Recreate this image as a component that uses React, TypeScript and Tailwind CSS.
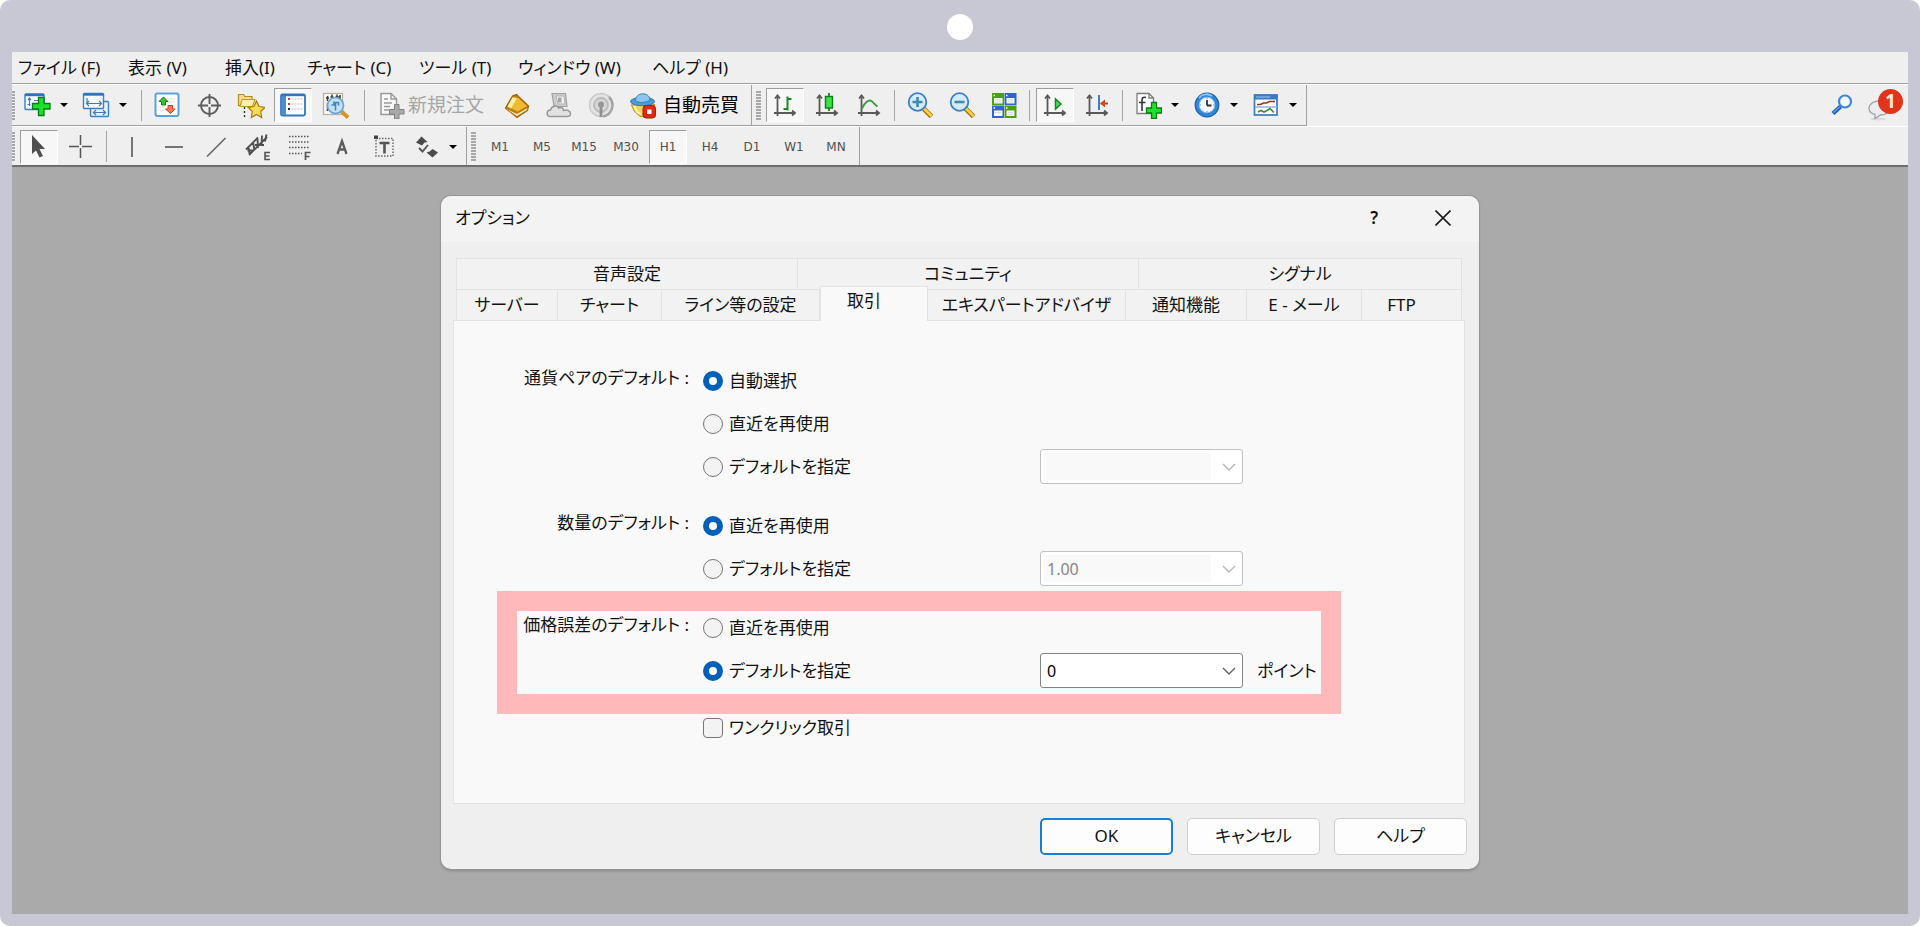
import React, { useState } from "react";
import type { ReactNode } from "react";

/* ---------- shared drawing helpers ---------- */

function Icon({ children }: { children: ReactNode }) {
  return (
    <svg width="28" height="28" viewBox="0 0 28 28" fill="none" aria-hidden="true" className="shrink-0">
      {children}
    </svg>
  );
}

const Axes = () => (
  <g stroke="#595959" strokeWidth="1.8" fill="none">
    <path d="M6.5 4.5V25M3 22H24" />
    <path d="M4 7.5L6.5 4.5L9 7.500M21 19.500L24 22L21 24.500" />
  </g>
);

const GreenPlus = () => (
  <path
    d="M17.5 11.5h5v5.5h5v5h-5v5.5h-5V22h-5v-5h5z"
    fill="#1fe02b"
    stroke="#0a7d12"
    strokeWidth="1.3"
  />
);

/* ---------- main toolbar icons ---------- */

const NewChart = () => (
  <Icon>
    <rect x="2" y="3" width="19" height="15.5" rx="1" fill="#f4faff" stroke="#3b7fc4" strokeWidth="1.4" />
    <path d="M2 4h19" stroke="#2e73bd" strokeWidth="2.4" />
    <path d="M6.5 7v8M5 9l1.500-2L8 9M4.500 13.500h3M11 9.500h4" stroke="#4a78a8" strokeWidth="1.2" />
    <path d="M15.500 6.500h5.500v6h6v5.500h-6v6.500h-5.500V18h-6v-5.500h6z" fill="#1fe02b" stroke="#0a7d12" strokeWidth="1.300" />
  </Icon>
);

const Profiles = () => (
  <Icon>
    <rect x="8.500" y="10.500" width="18" height="15" rx="1" fill="#e6f1fb" stroke="#3b7fc4" strokeWidth="1.400" />
    <path d="M12 21.500h11M14 19l-2.500 2.500L14 24M21 19l2.500 2.500L21 24" stroke="#4a78a8" strokeWidth="1.200" />
    <rect x="1.500" y="2.500" width="20" height="15" rx="1" fill="#f4faff" stroke="#3b7fc4" strokeWidth="1.400" />
    <path d="M1.500 3.500h20" stroke="#2e73bd" strokeWidth="2.400" />
    <path d="M5 7v7M4 12.500h15M7 10l-2.500 2.500L7 15M17 10l2.500 2.500L17 15" stroke="#4a78a8" strokeWidth="1.200" />
  </Icon>
);

const MarketWatch = () => (
  <Icon>
    <rect x="2.500" y="2.500" width="23" height="22.500" rx="2" fill="#fff" stroke="#58a3dc" strokeWidth="2" />
    <path d="M14 8h8M14 11h8M6 16h6M6 19h6" stroke="#dcdcdc" />
    <path d="M10.500 6l4.500 4.500h-2.500v3.500h-4v-3.500H6z" fill="#35c335" stroke="#148214" />
    <path d="M17.500 22.500l-5-4.500H15v-3.500h4.500V18h2.500z" fill="#ff7a5c" stroke="#d03a1c" />
  </Icon>
);

const DataWindow = () => (
  <Icon>
    <g stroke="#5e5e5e" strokeWidth="1.900">
      <circle cx="14.500" cy="14.500" r="8.500" />
      <path d="M14.500 3v10M14.500 16v10M3 14.500h10M16 14.500h10" />
    </g>
  </Icon>
);

const Navigator = () => (
  <Icon>
    <path d="M7.500 16v11" stroke="#333" strokeWidth="1.400" strokeDasharray="2 2" />
    <path d="M1.500 3.500h5l1.500 2h7v9h-13.500z" fill="#f6df7c" stroke="#b58a1c" strokeWidth="1.200" />
    <path d="M3 15.500l2-7h13l-2.500 7z" fill="#fdf0a8" stroke="#c29a2a" strokeWidth="1.100" />
    <path
      d="M19.500 10l2.500 5.500 6 .8-4.300 4.200 1 6-5.200-3-5.200 3 1-6-4.300-4.200 6-.8z"
      fill="#f7dc5c"
      stroke="#a97b12"
      strokeWidth="1.200"
    />
  </Icon>
);

const Terminal = () => (
  <Icon>
    <rect x="2" y="3.500" width="24" height="21" rx="1.500" fill="#fff" stroke="#3277bd" strokeWidth="1.800" />
    <path d="M2.500 4h4.500v20h-4.500z" fill="#4a8ed0" />
    <path d="M2 4.200h24" stroke="#3277bd" strokeWidth="2" />
    <path d="M9 8h2M9 13h2" stroke="#e33" strokeWidth="2" />
    <path d="M9 18h2" stroke="#222" strokeWidth="2" />
    <path d="M12.500 8h11M12.500 13h11M12.500 18h11" stroke="#b9b9c6" strokeDasharray="2 1" />
  </Icon>
);

const Tester = () => (
  <Icon>
    <rect x="2.500" y="2.500" width="19" height="21" fill="#fbf9f3" stroke="#b9b3a4" strokeWidth="1.300" />
    <path d="M6.500 5v5M6.500 12v8M11 3.500v5M16 3.500v5M19 4v6M5 7h3M9.500 6h3M14.500 6h5" stroke="#3c3c3c" strokeWidth="1.500" />
    <path d="M20 20l7 6.500" stroke="#d9922a" strokeWidth="3.800" />
    <circle cx="14.500" cy="14.500" r="8" fill="#c5e0f6" stroke="#6aa6da" strokeWidth="1.700" />
    <path d="M10.500 14h2.500v-3.500M14.500 19.500v-8h3v3" stroke="#4a83b6" strokeWidth="1.600" />
  </Icon>
);

const NewOrder = () => (
  <Icon>
    <path d="M4 2.500h10l5.500 5.500v15.500h-15.500z" fill="#f8f8f8" stroke="#9a9a9a" strokeWidth="1.500" />
    <path d="M14 2.500v5.500h5.500" stroke="#9a9a9a" strokeWidth="1.500" />
    <path d="M7 8h4M7 12h8M7 15.500h6M7 19h5" stroke="#9a9a9a" strokeWidth="1.400" />
    <path d="M17.500 13.500h4.500v5h5v4.500h-5v5h-4.500v-5h-5v-4.500h5z" fill="#a9a9a9" stroke="#808080" />
  </Icon>
);

const MetaEditor = () => (
  <Icon>
    <path d="M2.500 17L9.500 5 13.500 3.500l2.500 2.500 9.500 9-1 4.500-10.500 7z" fill="#c57f10" stroke="#9c6208" strokeWidth="1.200" />
    <path d="M9.500 6.500l6 .5 8.500 8-9.500 5.500-9.500-5z" fill="#f0bb30" />
    <path d="M9.500 6.500L4.500 15.500l3.500 2L14 7z" fill="#fff0a6" />
    <path d="M3.500 18.500l10.500 7 10.500-6.500v-2.500l-10.500 6-10.500-5z" fill="#fbe9b2" stroke="#a86c0c" strokeWidth=".8" />
  </Icon>
);

const TerminalHat = () => (
  <Icon>
    <path d="M7 2.500h13.500l1.500 13h-13z" fill="#cbcbcb" stroke="#a2a2a2" strokeWidth="1.200" />
    <path d="M11 5h8l1 8h-7z" fill="#f0f0f0" stroke="#b5b5b5" />
    <path d="M13 6.500h3.500v5h-3.500z" fill="#a4a4a4" />
    <path
      d="M5.500 25.500c-4.500 0-4.500-6.500 0-6.500 1-4.500 6.500-5 8-2 2.500-1.500 5 0 5 2.500 3-1 7 0 7 3 0 2-1.500 3-3.500 3z"
      fill="#e2e2e2"
      stroke="#989898"
      strokeWidth="1.500"
    />
  </Icon>
);

const Signals = () => (
  <Icon>
    <circle cx="14" cy="14" r="11.500" fill="#e2e2e2" stroke="#cacaca" strokeWidth="1.500" />
    <circle cx="14" cy="14" r="7" fill="#d6d6d6" stroke="#b9b9b9" strokeWidth="1.800" />
    <path d="M22 6a11.500 11.500 0 0 1-6 19.500" stroke="#a5a5a5" strokeWidth="2.500" />
    <path d="M14 14v12" stroke="#8f8f8f" strokeWidth="2.800" />
    <circle cx="14" cy="13.500" r="3" fill="#979797" />
  </Icon>
);

const AutoTrading = () => (
  <Icon>
    <path d="M2.500 14l3 6.500 6 5h6l7-6 1-6z" fill="#f7d84a" stroke="#c49a1c" strokeWidth="1.200" />
    <path d="M5 15l3 6 4 2" stroke="#fdf3ae" strokeWidth="2" />
    <ellipse cx="13.500" cy="10.500" rx="12" ry="4.200" fill="#4c9bd4" stroke="#2c77b4" />
    <path d="M6.500 9.500c0-8.500 13.500-9 14.500-1-2.500 3.500-11.500 4-14.500 1z" fill="#8cc6ee" stroke="#3583bd" />
    <rect x="14" y="14.500" width="12.500" height="12.500" rx="3" fill="#dd2a14" stroke="#a81a0a" />
    <rect x="18" y="18.500" width="4.500" height="4.500" fill="#fff" />
  </Icon>
);

const BarChart = () => (
  <Icon>
    <Axes />
    <path d="M16.500 5.500v14M16.500 8h4M12.500 18h4" stroke="#1c8a24" strokeWidth="2" />
  </Icon>
);

const CandleChart = () => (
  <Icon>
    <Axes />
    <path d="M16 2v18" stroke="#0d6e14" strokeWidth="1.600" />
    <rect x="12.500" y="5.500" width="7" height="11.500" fill="#3ee04a" stroke="#0d7d16" strokeWidth="1.400" />
  </Icon>
);

const LineChart = () => (
  <Icon>
    <Axes />
    <path d="M6.500 18c3-6 7-10 10-8 2 1.500 3.500 4 6 5.500" stroke="#3c9a44" strokeWidth="1.900" />
  </Icon>
);

function ZoomGlass({ plus }: { plus: boolean }) {
  return (
    <Icon>
      <path d="M17 17l8.500 8.500" stroke="#a8740e" strokeWidth="5" />
      <path d="M17.500 17l8 8" stroke="#f6cf45" strokeWidth="2.800" />
      <circle cx="11.500" cy="11" r="8.800" fill="#d3ecfb" stroke="#3d7fc6" strokeWidth="1.800" />
      <path d={plus ? "M11.500 6v10M6.500 11h10" : "M6.500 11h10"} stroke="#4287ac" strokeWidth="2.600" />
    </Icon>
  );
}

const TileWindows = () => (
  <Icon>
    <path d="M2 2h12v12H2z" fill="#4aa012" />
    <path d="M14.500 2h12v12h-12z" fill="#2d66d0" />
    <path d="M2 14.500h12V27H2z" fill="#2d66d0" />
    <path d="M14.500 14.500h12V27h-12z" fill="#4aa012" />
    <path d="M4 7h8.500v5.500H4zM16.500 7h8v5.500h-8zM4 19.500h8.500v5.500H4zM16.500 19.500h8v5.500h-8z" fill="#f9fcf6" />
    <path d="M5 9h6M5 11h6M18 9h5M18 11h5M5 21.500h6M18 21.500h5M18 23.500h5" stroke="#c3d2de" strokeWidth=".8" />
    <path d="M3.500 4.500h1.500M16 4.500h1.500M3.500 17h1.500M16 17h1.500" stroke="#fff" strokeWidth="1.300" />
  </Icon>
);

const AutoScroll = () => (
  <Icon>
    <Axes />
    <path d="M14.500 8v10l5.500-5z" fill="#55d75d" stroke="#128a1a" strokeWidth="1.500" />
  </Icon>
);

const ChartShift = () => (
  <Icon>
    <Axes />
    <path d="M16 4v15" stroke="#2d70b4" strokeWidth="1.800" />
    <path d="M18 12.500h7" stroke="#b33c18" strokeWidth="1.800" />
    <path d="M17 12.500l5-4v8z" fill="#d3481c" />
  </Icon>
);

const Indicators = () => (
  <Icon>
    <path d="M3 2.500h12l4.500 4.500v15.500H3z" fill="#fff" stroke="#7d7d7d" strokeWidth="1.300" />
    <path d="M15 2.500v4.500h4.500" stroke="#7d7d7d" strokeWidth="1.300" />
    <path d="M12 6.500c-3-1-4 .5-4 3V20M5 11.500h6.500" stroke="#333" strokeWidth="1.600" />
    <GreenPlus />
  </Icon>
);

const Periods = () => (
  <Icon>
    <circle cx="14" cy="14" r="11.800" fill="#2f84dc" stroke="#1b5ca8" strokeWidth="1.200" />
    <circle cx="14" cy="14" r="7.800" fill="#f3f8fc" stroke="#8fbbe4" />
    <path d="M14 14.500V9M14 14.500h4.500" stroke="#333" strokeWidth="1.800" />
    <path d="M14 7v1M14 20v1M7 14h1M20 14h1" stroke="#888" />
    <path d="M6 7c3-4 9-5 13-2" stroke="#8cc3f5" strokeWidth="1.800" />
  </Icon>
);

const Templates = () => (
  <Icon>
    <rect x="2.500" y="4" width="22.500" height="20" fill="#fff" stroke="#3a7ac0" strokeWidth="1.700" />
    <path d="M2 6h23.500" stroke="#3a7ac0" strokeWidth="5" />
    <path d="M4 6h14" stroke="#7fb2e6" strokeWidth="1.500" />
    <path d="M3 16h22" stroke="#8db4dc" strokeWidth="1.500" />
    <path d="M5 13.500h3.500l3-1.500h3l3-1.500h5.500" stroke="#963422" strokeWidth="1.700" />
    <path d="M6 21l3-1.500 3 1.500 3-1.500 3-2 4 4" stroke="#3d8a45" strokeWidth="1.700" />
  </Icon>
);

/* ---------- drawing toolbar icons ---------- */

const Cursor = () => (
  <Icon>
    <path d="M7 2v19l4-3.500 3.500 7 3.500-1.500-3.500-7H20z" fill="#4f4f4f" />
  </Icon>
);
const Crosshair = () => (
  <Icon>
    <path d="M13.500 2v10M13.500 15v10M2 13.500h10M15 13.500h10" stroke="#555" strokeWidth="1.500" />
  </Icon>
);
const VLine = () => (
  <Icon>
    <path d="M14 4v20" stroke="#555" strokeWidth="1.600" />
  </Icon>
);
const HLine = () => (
  <Icon>
    <path d="M5 14h18" stroke="#555" strokeWidth="1.600" />
  </Icon>
);
const TrendLine = () => (
  <Icon>
    <path d="M5 23.500L23.500 5" stroke="#666" strokeWidth="1.600" />
  </Icon>
);
const Channel = () => (
  <Icon>
    <path
      d="M2 16.500L14 4.500M5 22L23 4M4.500 13.500l1 7M9 9l1.500 8.500M13.500 6l.5 9M18 2.500l-.5 9M22.500 1.500l-1.500 7M3.500 17.500h6M11 12h9"
      stroke="#505050"
      strokeWidth="1.900"
    />
    <path d="M26 19.500h-5v7h5M21 23h4.500" stroke="#555" strokeWidth="1.600" />
  </Icon>
);
const Fibo = () => (
  <Icon>
    <path d="M3 3.500h21M3 9h21M3 14.500h21M3 20.500h13" stroke="#555" strokeWidth="1.500" strokeDasharray="1.500 1.500" />
    <path d="M19.500 27v-7.500h5M19.500 23.500h4" stroke="#555" strokeWidth="1.700" />
  </Icon>
);
const TextTool = () => (
  <Icon>
    <path d="M9.500 21L14 8 18.500 21M11 16.500h6.500" stroke="#5c5c5c" strokeWidth="2.300" />
  </Icon>
);
const LabelTool = () => (
  <Icon>
    <rect x="6" y="5.500" width="17" height="17.500" stroke="#666" strokeWidth="1.400" strokeDasharray="1.500 1.500" />
    <path d="M4 2.500h4v3.500H4z" fill="#444" />
    <path d="M9.500 10h10M14.500 10v10.500" stroke="#555" strokeWidth="2.600" />
  </Icon>
);
const Shapes = () => (
  <Icon>
    <path d="M9.500 3.500l6 5.500-3 .5L10 12.500 4 9.500z" fill="#4a4a4a" />
    <path d="M20.500 24.500l-6-5 3-1 3-2.500 5.500 3.500z" fill="#4a4a4a" />
    <path d="M7 15l3.500 3.500 5.500-6.500" stroke="#555" strokeWidth="1.900" />
  </Icon>
);

/* ---------- toolbar building blocks ---------- */

function ToolButton({ label, pressed = false, children }: { label: string; pressed?: boolean; children: ReactNode }) {
  return (
    <button
      type="button"
      aria-label={label}
      aria-pressed={pressed}
      className={
        "flex h-[34px] w-[38px] shrink-0 items-center justify-center border font-['DejaVu_Sans',sans-serif] text-xs text-[#505050] " +
        (pressed ? "border-t-[#9d9d9d] border-r-white border-b-white border-l-[#9d9d9d] bg-[#f7f7f7]" : "border-transparent")
      }
    >
      {children}
    </button>
  );
}

function DropArrow({ label }: { label: string }) {
  return (
    <button type="button" aria-label={label} className="flex h-[34px] w-4 shrink-0 items-center justify-center">
      <svg width="8" height="4" viewBox="0 0 8 4" aria-hidden="true">
        <path d="M0 0h8L4 4z" fill="#000" />
      </svg>
    </button>
  );
}

const Sep = () => <span className="mx-[6px] h-[31px] w-px shrink-0 bg-[#a5a5a5]" />;

function Grip({ wide = false }: { wide?: boolean }) {
  return (
    <span
      className={
        "h-[29px] shrink-0 bg-[repeating-linear-gradient(to_bottom,#a8a8a8_0_2px,#efefef_2px_3px)] " +
        (wide ? "ml-1 w-[5px]" : "w-[3px]")
      }
    />
  );
}

const menus = [
  { text: "ファイル (F)", width: "w-[110px]" },
  { text: "表示 (V)", width: "w-[97px]" },
  { text: "挿入(I)", width: "w-[82px]" },
  { text: "チャート (C)", width: "w-[112px]" },
  { text: "ツール (T)", width: "w-[99px]" },
  { text: "ウィンドウ (W)", width: "w-[134px]" },
  { text: "ヘルプ (H)", width: "w-[100px]" },
];

const periods = ["M1", "M5", "M15", "M30", "H1", "H4", "D1", "W1", "MN"];

function Toolbars() {
  return (
    <header className="flex flex-col border-b-2 border-b-[#6e6e6e] bg-[#efefef]">
      <nav className="flex h-8 items-center border-b border-b-[#a0a0a0] pl-[6px]">
        {menus.map((m) => (
          <button key={m.text} type="button" className={"shrink-0 text-left text-[17px] leading-6 whitespace-nowrap " + m.width}>
            {m.text}
          </button>
        ))}
      </nav>

      <div className="flex items-start justify-between border-t border-t-white">
        <div className="flex h-[41px] items-center border-b border-b-[#a0a0a0]">
          <div className="flex h-full items-center border-r border-r-[#a0a0a0] pr-[3px]">
            <Grip />
            <div className="mr-1 ml-[3px] flex">
              <ToolButton label="新規チャート"><NewChart /></ToolButton>
              <DropArrow label="新規チャートのメニュー" />
              <div className="w-[5px]" />
              <ToolButton label="組表示"><Profiles /></ToolButton>
              <DropArrow label="組表示のメニュー" />
            </div>
            <Sep />
            <div className="mr-1 flex gap-1">
              <ToolButton label="気配値"><MarketWatch /></ToolButton>
              <ToolButton label="データウィンドウ"><DataWindow /></ToolButton>
              <ToolButton label="ナビゲーター"><Navigator /></ToolButton>
              <ToolButton label="ターミナル" pressed><Terminal /></ToolButton>
              <ToolButton label="ストラテジーテスター"><Tester /></ToolButton>
            </div>
            <Sep />
            <div className="flex gap-1">
              <button type="button" disabled className="flex w-[123px] items-center gap-[3px] pl-[6px] text-[19px] leading-6 whitespace-nowrap text-[#a6a6a6]">
                <NewOrder />
                新規注文
              </button>
              <ToolButton label="メタエディター"><MetaEditor /></ToolButton>
              <ToolButton label="マーケット"><TerminalHat /></ToolButton>
              <ToolButton label="シグナル配信"><Signals /></ToolButton>
              <button type="button" className="flex w-[124px] items-center gap-[6px] pl-[5px] text-[19px] leading-6 whitespace-nowrap text-black">
                <AutoTrading />
                自動売買
              </button>
            </div>
          </div>

          <div className="flex h-full items-center border-r border-r-[#a0a0a0] pr-[5px]">
            <Grip wide />
            <div className="ml-[5px] flex gap-1">
              <ToolButton label="バーチャート" pressed><BarChart /></ToolButton>
              <ToolButton label="ローソク足"><CandleChart /></ToolButton>
              <ToolButton label="ラインチャート"><LineChart /></ToolButton>
            </div>
            <Sep />
            <div className="flex gap-1">
              <ToolButton label="ズームイン"><ZoomGlass plus /></ToolButton>
              <ToolButton label="ズームアウト"><ZoomGlass plus={false} /></ToolButton>
              <ToolButton label="ウィンドウの整列"><TileWindows /></ToolButton>
            </div>
            <Sep />
            <div className="flex gap-1">
              <ToolButton label="自動スクロール" pressed><AutoScroll /></ToolButton>
              <ToolButton label="チャートシフト"><ChartShift /></ToolButton>
            </div>
            <Sep />
            <div className="flex gap-[5px]">
              <div className="flex">
                <ToolButton label="インディケータ"><Indicators /></ToolButton>
                <DropArrow label="インディケータのメニュー" />
              </div>
              <div className="flex">
                <ToolButton label="時間足設定"><Periods /></ToolButton>
                <DropArrow label="時間足のメニュー" />
              </div>
              <div className="flex">
                <ToolButton label="定型チャート"><Templates /></ToolButton>
                <DropArrow label="定型チャートのメニュー" />
              </div>
            </div>
          </div>
        </div>

        <div className="flex h-10 items-center gap-[14px] pr-[5px]">
          <button type="button" aria-label="検索" className="flex">
            <svg width="22" height="22" viewBox="0 0 22 22" fill="none" aria-hidden="true">
              <path d="M9.500 12.500L2 19.500" stroke="#1f5fbf" strokeWidth="4.400" />
              <path d="M8.500 13L2.500 18.500" stroke="#6aa4ea" strokeWidth="1.200" />
              <circle cx="14" cy="7.500" r="6" fill="#f3f8fe" stroke="#3f86d8" strokeWidth="2.200" />
            </svg>
          </button>
          <button type="button" aria-label="メッセージ" className="relative h-9 w-9">
            <svg width="36" height="36" viewBox="0 0 36 36" fill="none" aria-hidden="true">
              <ellipse cx="11" cy="32" rx="8" ry="1.500" fill="#dadada" />
              <path
                d="M12 14c6 0 11 3.500 11 7.500S18.500 28 13.500 28L8 31.500v-4C4 26.500 2 24.500 2 21.500 2 17 7 14 12 14z"
                fill="#e9edf2"
                stroke="#a3a3a3"
                strokeWidth="1.300"
              />
            </svg>
            <span className="absolute top-[2px] right-0 flex h-[25px] w-[25px] items-center justify-center rounded-full bg-[#e0351b] text-[19px] leading-none font-bold text-[#fbe6e0]">
              1
            </span>
          </button>
        </div>
      </div>

      <div className="flex h-[39px] items-center border-t border-t-white">
        <div className="flex h-full items-center border-r border-r-[#a0a0a0] pt-px pr-[5px]">
          <Grip />
          <div className="ml-[5px] flex gap-1">
            <ToolButton label="カーソル" pressed><Cursor /></ToolButton>
            <ToolButton label="十字カーソル"><Crosshair /></ToolButton>
          </div>
          <Sep />
          <div className="flex gap-1">
            <ToolButton label="垂直線"><VLine /></ToolButton>
            <ToolButton label="水平線"><HLine /></ToolButton>
            <ToolButton label="トレンドライン"><TrendLine /></ToolButton>
            <ToolButton label="等距離チャネル"><Channel /></ToolButton>
            <ToolButton label="フィボナッチ"><Fibo /></ToolButton>
            <ToolButton label="テキスト"><TextTool /></ToolButton>
            <ToolButton label="ラベル"><LabelTool /></ToolButton>
            <ToolButton label="図形"><Shapes /></ToolButton>
          </div>
          <DropArrow label="図形のメニュー" />
        </div>
        <div className="flex h-full items-center border-r border-r-[#a0a0a0] pt-px pr-1">
          <Grip wide />
          <div className="ml-[5px] flex gap-1">
            {periods.map((p) => (
              <ToolButton key={p} label={p} pressed={p === "H1"}>
                {p}
              </ToolButton>
            ))}
          </div>
        </div>
      </div>
    </header>
  );
}

/* ---------- options dialog ---------- */

const upperTabs = ["音声設定", "コミュニティ", "シグナル"];

const lowerTabs = [
  { text: "サーバー", width: "w-[102px]" },
  { text: "チャート", width: "w-[104px]" },
  { text: "ライン等の設定", width: "w-[158px]" },
  { text: "取引", width: "w-[108px] pr-5" },
  { text: "エキスパートアドバイザ", width: "w-[198px]" },
  { text: "通知機能", width: "w-[121px]" },
  { text: "E - メール", width: "w-[115px]" },
  { text: "FTP", width: "flex-1 pr-5" },
];

function Combo({ label, value, disabled = false }: { label: string; value: string; disabled?: boolean }) {
  return (
    <div
      className={
        "flex h-[35px] w-[203px] items-center rounded-[3px] border bg-white p-[3px] " +
        (disabled ? "border-[#c2c2c2]" : "border-[#858585]")
      }
    >
      <select
        aria-label={label}
        disabled={disabled}
        defaultValue={value}
        className={
          "h-full w-[167px] appearance-none pl-[3px] text-base leading-none outline-none " +
          (disabled ? "bg-[#f9f9f9] text-[#858585]" : "bg-white text-black")
        }
      >
        <option value={value}>{value}</option>
      </select>
      <svg width="14" height="8" viewBox="0 0 14 8" fill="none" aria-hidden="true" className="ml-[11px]">
        <path d="M1 1l6 6 6-6" stroke={disabled ? "#b5b5b5" : "#606060"} strokeWidth="1.400" />
      </svg>
    </div>
  );
}

type Choice = { text: string; combo?: string; disabled?: boolean; unit?: string };

function OptionGroup({ id, title, initial, choices, highlighted = false }: { id: string; title: string; initial: number; choices: Choice[]; highlighted?: boolean }) {
  const [selected, setSelected] = useState(initial);
  return (
    <div role="radiogroup" aria-labelledby={id} className="relative flex gap-[14px]">
      <div id={id} className="flex h-[38px] w-[235px] shrink-0 items-center justify-end">
        {title} :
      </div>
      <div className="flex flex-col">
        {choices.map((c, i) => (
          <div key={c.text} className="flex h-[43px] items-center">
            <label className="flex w-[337px] items-center gap-[6px]">
              <input
                type="radio"
                name={id}
                checked={selected === i}
                onChange={() => setSelected(i)}
                className="h-5 w-5 appearance-none rounded-full border border-[#757575] bg-[#f3f3f3] checked:border-[6px] checked:border-[#005fb8] checked:bg-white"
              />
              {c.text}
            </label>
            {c.combo !== undefined && <Combo label={title + c.text} value={c.combo} disabled={c.disabled} />}
            {c.unit && <span className="ml-[14px]">{c.unit}</span>}
          </div>
        ))}
      </div>
      {highlighted && (
        <div className="pointer-events-none absolute -top-[15px] right-[123px] -bottom-[22px] left-[43px] border-[20px] border-[#ffb9ba]" />
      )}
    </div>
  );
}

function DialogButton({ children, primary = false }: { children: ReactNode; primary?: boolean }) {
  return (
    <button
      type="button"
      className={
        "h-[37px] w-[133px] rounded-[5px] bg-[#fdfdfd] pb-[2px] text-[17px] leading-6 " +
        (primary ? "border-2 border-[#1a7fd4]" : "border border-[#cfcfcf]")
      }
    >
      {children}
    </button>
  );
}

function OptionsDialog() {
  return (
    <section
      role="dialog"
      aria-labelledby="dialog-title"
      className="w-full max-w-[1038px] overflow-hidden rounded-[10px] bg-[#efefef] text-[17px] leading-6 shadow-[0_0_0_1px_#949494,0_2px_3px_#888]"
    >
      <div className="flex h-[46px] items-center justify-between bg-[#f3f3f3] pr-7 pb-[2px] pl-[14px]">
        <h1 id="dialog-title">オプション</h1>
        <div className="flex items-center gap-[57px]">
          <button type="button" aria-label="ヘルプを表示" className="text-[17px] leading-6 font-semibold">
            ?
          </button>
          <button type="button" aria-label="閉じる" className="flex">
            <svg width="16" height="16" viewBox="0 0 16 16" aria-hidden="true">
              <path d="M0.500 0.500l15 15M15.500 0.500l-15 15" stroke="#1a1a1a" strokeWidth="1.600" />
            </svg>
          </button>
        </div>
      </div>

      <div className="mt-4 mr-[14px] ml-3">
        <div role="tablist" className="mr-[3px] ml-[3px]">
          <div className="grid h-[31px] grid-cols-[341fr_341fr_323fr] border-t border-l border-[#e3e3e3]">
            {upperTabs.map((t) => (
              <button key={t} type="button" role="tab" aria-selected="false" className="border-r border-[#e3e3e3] bg-[#f2f2f2]">
                {t}
              </button>
            ))}
          </div>
          <div className="flex h-[31px] items-end">
            {lowerTabs.map((t) =>
              t.text === "取引" ? (
                <button
                  key={t.text}
                  type="button"
                  role="tab"
                  aria-selected="true"
                  className={"relative z-10 -mb-px h-[35px] border border-b-0 border-[#e3e3e3] bg-[#f9f9f9] pb-[6px] " + t.width}
                >
                  {t.text}
                </button>
              ) : (
                <button
                  key={t.text}
                  type="button"
                  role="tab"
                  aria-selected="false"
                  className={"h-[31px] border-t border-r border-[#e3e3e3] bg-[#f2f2f2] pb-px whitespace-nowrap first:border-l " + t.width}
                >
                  {t.text}
                </button>
              ),
            )}
          </div>
        </div>

        <div role="tabpanel" className="flex h-[484px] flex-col gap-4 border border-[#e3e3e3] bg-[#f9f9f9] pt-[38px]">
          <OptionGroup
            id="symbol"
            title="通貨ペアのデフォルト"
            initial={0}
            choices={[{ text: "自動選択" }, { text: "直近を再使用" }, { text: "デフォルトを指定", combo: "", disabled: true }]}
          />
          <OptionGroup
            id="volume"
            title="数量のデフォルト"
            initial={0}
            choices={[{ text: "直近を再使用" }, { text: "デフォルトを指定", combo: "1.00", disabled: true }]}
          />
          <OptionGroup
            id="deviation"
            title="価格誤差のデフォルト"
            initial={1}
            highlighted
            choices={[{ text: "直近を再使用" }, { text: "デフォルトを指定", combo: "0", unit: "ポイント" }]}
          />
          <label className="ml-[249px] flex h-10 items-center gap-[6px] self-start">
            <input type="checkbox" className="h-5 w-5 appearance-none rounded-[4px] border border-[#757575] bg-[#f3f3f3] checked:bg-[#005fb8]" />
            ワンクリック取引
          </label>
        </div>
      </div>

      <div className="flex justify-end gap-[14px] pt-[14px] pr-3 pb-[14px]">
        <DialogButton primary>OK</DialogButton>
        <DialogButton>キャンセル</DialogButton>
        <DialogButton>ヘルプ</DialogButton>
      </div>
    </section>
  );
}

export default function App() {
  return (
    <div className="flex min-h-screen flex-col rounded-[10px] bg-[#c8c7d4] px-3 pb-3 font-['Noto_Sans','Noto_Sans_CJK_JP',sans-serif] text-[#111] [font-feature-settings:'palt']">
      <div className="flex h-[52px] shrink-0 items-center justify-center pt-[2px]">
        <span className="h-[26px] w-[26px] rounded-full bg-white" />
      </div>
      <div className="flex flex-1 flex-col">
        <Toolbars />
        <main className="flex flex-1 items-start justify-center bg-[#aaaaaa] pt-[29px]">
          <OptionsDialog />
        </main>
      </div>
    </div>
  );
}
